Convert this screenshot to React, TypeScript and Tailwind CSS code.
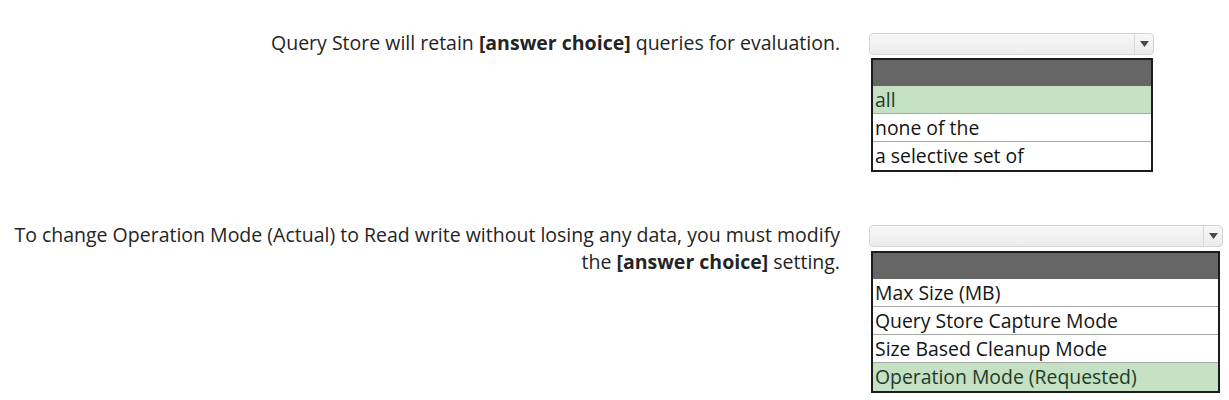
function Arrow() {
  return (
    <svg width="9" height="6" viewBox="0 0 9 6" className="block">
      <path d="M0 0 H9 L4.5 6 Z" fill="#4a4a4a" />
    </svg>
  )
}

function Select({ width }: { width: string }) {
  return (
    <div
      className={`${width} h-[22px] flex rounded-[4px] border border-[#d4d4d4] bg-gradient-to-b from-[#f7f7f7] to-[#ececec]`}
    >
      <div className="flex-1" />
      <div className="w-[19px] flex items-center justify-center border-l border-[#d9d9d9]">
        <Arrow />
      </div>
    </div>
  )
}

type Option = { label: string; picked?: boolean }

function OptionList({ width, options }: { width: string; options: Option[] }) {
  return (
    <div className={`${width} ml-[2px] border-2 border-[#1c1c1c] bg-white`}>
      <div className="h-[26px] bg-[#666666]" />
      {options.map((o, i) => (
        <div
          key={o.label}
          className={`h-[28px] flex items-center pl-[2px] text-[19.4px] leading-none ${
            i < options.length - 1 ? 'border-b border-[#a6a6a6]' : ''
          } ${o.picked ? 'bg-[#c4e1c4] text-[#1f3b2a]' : 'text-[#141414]'}`}
        >
          {o.label}
        </div>
      ))}
    </div>
  )
}

export default function App() {
  return (
    <main className="w-[1229px] h-[400px] bg-white font-['Open_Sans',sans-serif] text-[#242424]">
      <div className="flex pt-[33px]">
        <div className="w-[840px] -mt-[4px] text-right text-[19.5px] leading-[27px]">
          Query Store will retain <b className="font-bold">[answer choice]</b> queries for evaluation.
        </div>
        <div className="ml-[29px] flex flex-col gap-[3px]">
          <Select width="w-[285px]" />
          <OptionList
            width="w-[282px]"
            options={[{ label: 'all', picked: true }, { label: 'none of the' }, { label: 'a selective set of' }]}
          />
        </div>
      </div>

      <div className="flex pt-[53px]">
        <div className="w-[840px] -mt-[4px] text-right text-[19.5px] leading-[27px]">
          To change Operation Mode (Actual) to Read write without losing any data, you must modify
          <br />
          the <b className="font-bold">[answer choice]</b> setting.
        </div>
        <div className="ml-[29px] flex flex-col gap-[4px]">
          <Select width="w-[354px]" />
          <OptionList
            width="w-[349px]"
            options={[
              { label: 'Max Size (MB)' },
              { label: 'Query Store Capture Mode' },
              { label: 'Size Based Cleanup Mode' },
              { label: 'Operation Mode (Requested)', picked: true },
            ]}
          />
        </div>
      </div>
    </main>
  )
}
